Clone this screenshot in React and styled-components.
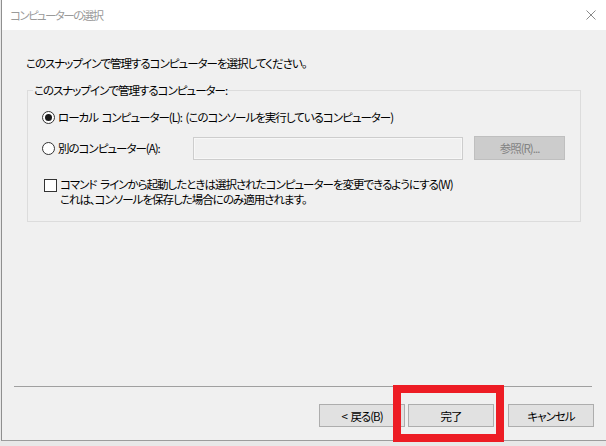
import React from "react";
import styled, { createGlobalStyle } from "styled-components";

const Global = createGlobalStyle`
  html, body { margin: 0; padding: 0; background: #e8e8e8; }
  body {
    width: 606px; height: 446px; overflow: hidden;
    font-family: "Noto Sans CJK JP", "Noto Sans", sans-serif;
    font-size: 11px; color: #000;
  }
  * { box-sizing: border-box; }
`;

const jp = `
  font-size: 11.5px;
  letter-spacing: -1px;
  word-spacing: 2px;
  font-feature-settings: "palt";
`;

const Stage = styled.div`
  position: relative;
  width: 606px;
  height: 446px;
`;

const Window = styled.div`
  margin-left: 1px;
  width: 605px;
  height: 441px;
  border-left: 1px solid #8f8f8f;
  border-bottom: 1px solid #9c9c9c;
  background: #f0f0f0;
  display: flex;
  flex-direction: column;
`;

const TitleBar = styled.div`
  height: 30px;
  background: #fff;
  display: flex;
  align-items: center;
  padding-left: 8px;
  padding-right: 10px;
`;

const Title = styled.span`
  ${jp}
  letter-spacing: -1.6px;
  color: #9a9a9a;
  line-height: 16px;
`;

const CloseIcon = styled.svg`
  margin-left: auto;
  width: 10px;
  height: 10px;
`;

const Content = styled.div`
  flex: 1;
  display: flex;
  flex-direction: column;
`;

const Text = styled.span`
  ${jp}
  line-height: ${(p) => p.$lh || 16}px;
  white-space: nowrap;
`;

const Instruction = styled(Text)`
  display: block;
  margin: 25px 0 0 24px;
`;

const Group = styled.fieldset`
  margin: 11px 25px 0 25px;
  padding: 0;
  min-width: 0;
  border: 1px solid #dcdcdc;
`;

const Legend = styled.legend`
  ${jp}
  margin-left: 5px;
  padding: 0 1px;
  line-height: 16px;
`;

const GroupBody = styled.div`
  display: flex;
  flex-direction: column;
  padding: 9px 0 14px 14px;
`;

const Row = styled.div`
  display: flex;
  align-items: ${(p) => p.$align || "center"};
  height: ${(p) => (p.$h ? `${p.$h}px` : "auto")};
  margin-top: ${(p) => p.$mt || 0}px;
`;

const Radio = styled.span`
  position: relative;
  flex: none;
  width: 13px;
  height: 13px;
  border: 1px solid #333;
  border-radius: 50%;
  background: #fff;
  margin-right: 3px;
  &::after {
    content: "";
    display: ${(p) => (p.$checked ? "block" : "none")};
    position: absolute;
    left: 2px;
    top: 2px;
    width: 7px;
    height: 7px;
    border-radius: 50%;
    background: #1a1a1a;
  }
`;

const RadioLabel = styled(Text)`
  width: ${(p) => (p.$w ? `${p.$w}px` : "auto")};
`;

const Input = styled.div`
  width: 270px;
  height: 23px;
  border: 1px solid #cdcdcd;
  box-shadow: inset 0 0 0 1px #f7f7f7;
  background: #f0f0f0;
`;

const BrowseButton = styled.div`
  ${jp}
  width: 91px;
  height: 24px;
  margin-left: 11px;
  background: #cccccc;
  border: 1px solid #bfbfbf;
  color: #838383;
  display: flex;
  align-items: center;
  justify-content: center;
`;

const Checkbox = styled.span`
  flex: none;
  width: 13px;
  height: 13px;
  margin: 2px 3px 0 2px;
  border: 1px solid #333;
  background: #fff;
`;

const CheckText = styled.div`
  display: flex;
  flex-direction: column;
`;

const Footer = styled.div`
  margin-top: auto;
  display: flex;
  flex-direction: column;
`;

const Separator = styled.div`
  height: 1px;
  margin: 0 14px 0 12px;
  background: #a0a0a0;
`;

const ButtonRow = styled.div`
  display: flex;
  justify-content: flex-end;
  margin-top: 17px;
  padding: 0 12px 13px 0;
`;

const Button = styled.div`
  ${jp}
  width: 86px;
  height: 23px;
  margin-left: ${(p) => p.$ml || 0}px;
  background: #e1e1e1;
  border: 1px solid #adadad;
  display: flex;
  align-items: center;
  justify-content: center;
`;

const Highlight = styled.div`
  position: absolute;
  left: 393px;
  top: 385px;
  width: 111px;
  height: 57px;
  border: 8px solid #ed1c24;
  pointer-events: none;
`;

export default function App() {
  return (
    <Stage>
      <Global />
      <Window>
        <TitleBar>
          <Title>コンピューターの選択</Title>
          <CloseIcon viewBox="0 0 10 10">
            <path d="M0.5 0.5 L9.5 9.5 M9.5 0.5 L0.5 9.5" stroke="#8a8a8a" strokeWidth="1" fill="none" />
          </CloseIcon>
        </TitleBar>
        <Content>
          <Instruction>このスナップインで管理するコンピューターを選択してください。</Instruction>
          <Group>
            <Legend>このスナップインで管理するコンピューター:</Legend>
            <GroupBody>
              <Row $h={20}>
                <Radio $checked />
                <RadioLabel>ローカル コンピューター(L): (このコンソールを実行しているコンピューター)</RadioLabel>
              </Row>
              <Row $h={24} $mt={9}>
                <Radio />
                <RadioLabel $w={135}>別のコンピューター(A):</RadioLabel>
                <Input />
                <BrowseButton>参照(R)...</BrowseButton>
              </Row>
              <Row $mt={17} $align="flex-start">
                <Checkbox />
                <CheckText>
                  <Text $lh={15}>コマンド ラインから起動したときは選択されたコンピューターを変更できるようにする(W)</Text>
                  <Text $lh={15}>これは、コンソールを保存した場合にのみ適用されます。</Text>
                </CheckText>
              </Row>
            </GroupBody>
          </Group>
          <Footer>
            <Separator />
            <ButtonRow>
              <Button>&lt; 戻る(B)</Button>
              <Button $ml={3}>完了</Button>
              <Button $ml={14}>キャンセル</Button>
            </ButtonRow>
          </Footer>
        </Content>
      </Window>
      <Highlight />
    </Stage>
  );
}
